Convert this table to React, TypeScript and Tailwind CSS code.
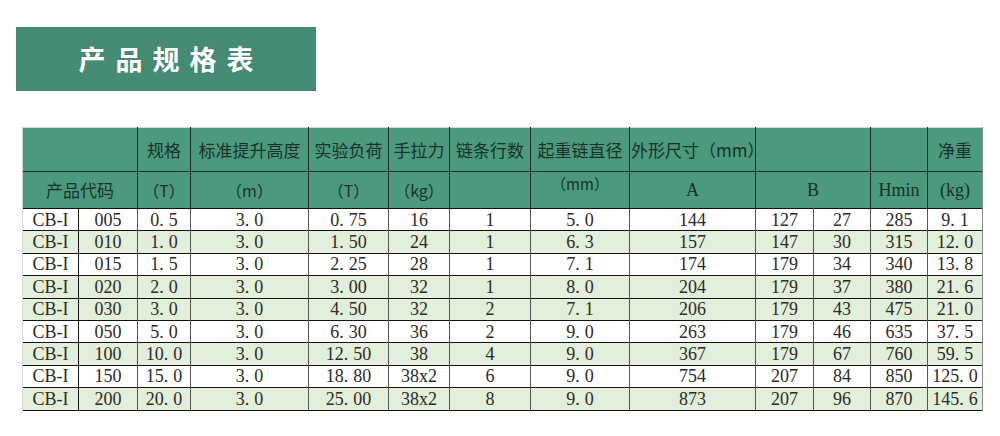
import React from "react"

const rows = [
  ["CB-I", "005", "0.5", "3.0", "0.75", "16", "1", "5.0", "144", "127", "27", "285", "9.1"],
  ["CB-I", "010", "1.0", "3.0", "1.50", "24", "1", "6.3", "157", "147", "30", "315", "12.0"],
  ["CB-I", "015", "1.5", "3.0", "2.25", "28", "1", "7.1", "174", "179", "34", "340", "13.8"],
  ["CB-I", "020", "2.0", "3.0", "3.00", "32", "1", "8.0", "204", "179", "37", "380", "21.6"],
  ["CB-I", "030", "3.0", "3.0", "4.50", "32", "2", "7.1", "206", "179", "43", "475", "21.0"],
  ["CB-I", "050", "5.0", "3.0", "6.30", "36", "2", "9.0", "263", "179", "46", "635", "37.5"],
  ["CB-I", "100", "10.0", "3.0", "12.50", "38", "4", "9.0", "367", "179", "67", "760", "59.5"],
  ["CB-I", "150", "15.0", "3.0", "18.80", "38x2", "6", "9.0", "754", "207", "84", "850", "125.0"],
  ["CB-I", "200", "20.0", "3.0", "25.00", "38x2", "8", "9.0", "873", "207", "96", "870", "145.6"],
]

const green = [false, true, false, true, true, false, true, false, true]
const widths = [56, 59, 53, 118, 80, 61, 81, 99, 126, 58, 57, 57, 55]

const cjk = "font-['Noto_Sans_CJK_SC','Noto_Sans',sans-serif]"
const serif = "font-['Liberation_Serif','Noto_Sans_CJK_SC',serif]"

function Num({ v }: { v: string }) {
  const parts = v.split(".")
  if (parts.length < 2) return <>{v}</>
  return (
    <>
      {parts[0]}
      <span className="mr-[5px]">.</span>
      {parts[1]}
    </>
  )
}

export default function App() {
  return (
    <div className="w-[1000px] h-[436px] bg-white pt-[27px] pl-[16px]">
      <div className="w-[300px] h-[64px] bg-[#458b73] flex items-center justify-center">
        <span className={`${cjk} text-white font-bold text-[27px] tracking-[10px] pl-[10px]`}>
          产品规格表
        </span>
      </div>

      <table className="mt-[36px] ml-[6px] w-[960px] table-fixed border-collapse text-[#2e2a26]">
        <colgroup>
          {widths.map((w, i) => (
            <col key={i} style={{ width: w }} />
          ))}
        </colgroup>
        <thead className={`${cjk} bg-[#4c9a7d] text-[#17302a] text-[17px]`}>
          <tr className="h-[44px] border-t border-[#cfd8d4]">
            <th colSpan={2} className="border-r border-[#1e2a26] border-l border-l-[#cfd8d4]"></th>
            <th className="font-normal border-x border-[#1e2a26]">规格</th>
            <th className="font-normal border-x border-[#1e2a26]">标准提升高度</th>
            <th className="font-normal border-x border-[#1e2a26]">实验负荷</th>
            <th className="font-normal border-x border-[#1e2a26]">手拉力</th>
            <th className="font-normal border-x border-[#1e2a26]">链条行数</th>
            <th className="font-normal border-x border-[#1e2a26]">起重链直径</th>
            <th className="font-normal border-x border-[#1e2a26] text-left pl-[1px] whitespace-nowrap">外形尺寸（mm）</th>
            <th colSpan={2} className="border-x border-[#1e2a26]"></th>
            <th className="border-x border-[#1e2a26]"></th>
            <th className="font-normal border-l border-[#1e2a26] border-r border-r-[#8a8a8a]">净重</th>
          </tr>
          <tr className="h-[37px] border-t border-[#1e2a26]">
            <th colSpan={2} className="font-normal border-r border-[#1e2a26] border-l border-l-[#cfd8d4]">产品代码</th>
            <th className="font-normal border-x border-[#1e2a26] text-[16px]">（T）</th>
            <th className="font-normal border-x border-[#1e2a26] text-[16px]">（m）</th>
            <th className="font-normal border-x border-[#1e2a26] text-[16px]">（T）</th>
            <th className="font-normal border-x border-[#1e2a26] text-[16px]">（kg）</th>
            <th className="border-x border-[#1e2a26]"></th>
            <th className="font-normal border-x border-[#1e2a26] text-[15px] align-top pt-[1px]">（mm）</th>
            <th className={`font-normal border-x border-[#1e2a26] ${serif} text-[18px]`}>A</th>
            <th colSpan={2} className={`font-normal border-x border-[#1e2a26] ${serif} text-[18px]`}>B</th>
            <th className={`font-normal border-x border-[#1e2a26] ${serif} text-[18px]`}>Hmin</th>
            <th className={`font-normal border-l border-[#1e2a26] border-r border-r-[#8a8a8a] ${serif} text-[18px]`}>(kg)</th>
          </tr>
        </thead>
        <tbody className={`${serif} text-[18px]`}>
          {rows.map((r, i) => (
            <tr
              key={r[1]}
              className={`h-[22.4px] border-y border-[#111] ${green[i] ? "bg-[#e2efda]" : "bg-white"}`}
            >
              {r.map((c, j) => (
                <td
                  key={j}
                  className={`text-center leading-[20px] p-0 whitespace-nowrap ${
                    j === 0
                      ? "border-l border-l-[#d8d8d8] border-r border-r-[#111]"
                      : j === 12
                      ? "border-l border-l-[#555] border-r border-r-[#8a8a8a]"
                      : "border-r border-r-[#555]"
                  }`}
                >
                  <Num v={c} />
                </td>
              ))}
            </tr>
          ))}
        </tbody>
      </table>
    </div>
  )
}
